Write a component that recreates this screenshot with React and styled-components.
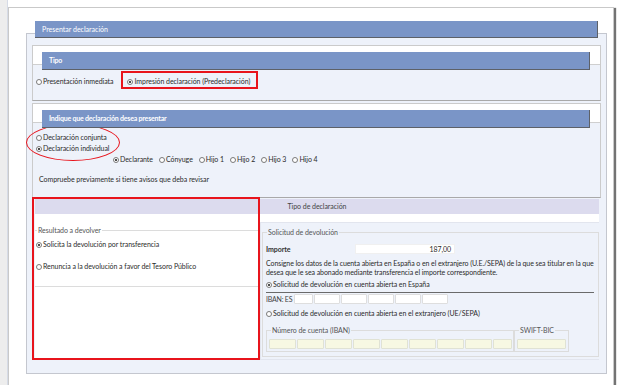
import React from 'react';
import styled, { createGlobalStyle } from 'styled-components';

const GlobalStyle = createGlobalStyle`
  html, body {
    margin: 0;
    padding: 0;
    background: #fff;
  }
  body {
    font-family: Lato, "Liberation Sans", sans-serif;
    font-size: 7px;
    letter-spacing: -0.05px;
    line-height: 11px;
    color: #2b2b2b;
  }
  *, ::before, ::after {
    box-sizing: border-box;
  }
`;

const Page = styled.div`
  position: relative;
  width: 624px;
  height: 385px;
  overflow: hidden;
  padding: 7px 0 0 8px;
  background: linear-gradient(to right, #ededed 0 7px, #d6dbe6 7px 8px, #fff 8px);
`;

const Window = styled.div`
  width: 606px;
  height: 400px;
  background: #fff;
  border: 1px solid #c9c9c9;
  box-shadow: 2px 1px 1px rgba(0, 0, 0, 0.55);
  padding: 13px 6px 0 17px;
`;

const Panel = styled.div`
  display: flex;
  flex-direction: column;
`;

const BarTitle = styled.div`
  position: relative;
  z-index: 2;
  height: ${p => p.$h || 17}px;
  margin: 0 ${p => p.$mr || 9}px 0 ${p => p.$ml || 9}px;
  padding-left: 7px;
  background: #7a95c7;
  border-right: 1px solid #5d6168;
  border-bottom: 1px solid #5d6168;
  color: #fff;
  font-weight: ${p => (p.$bold ? 700 : 400)};
  letter-spacing: ${p => (p.$bold ? '-0.2px' : '0')};
  line-height: ${p => (p.$h || 17) - 1}px;
`;

const PanelBox = styled.div`
  margin-top: -5px;
  border: 1px solid #c4c7cf;
  background: #eef2fa;
  padding: 11px 5px 13px 5px;
`;

const Section = styled.div`
  margin-top: ${p => p.$mt || 0}px;
  border: 1px solid #cbcbcb;
  border-bottom-color: #a9a9a9;
  background: #fff;
  padding-top: 6px;
`;

const SectionBody = styled.div`
  margin-top: -6px;
  border-top: 1px solid #cfcfcf;
  background: #eef2fa;
  padding: ${p => p.$pad};
`;

const RadioRow = styled.div`
  display: flex;
  align-items: center;
  gap: ${p => p.$gap || 0}px;
  height: 11px;
  margin-left: ${p => p.$ml || 0}px;
  margin-top: ${p => p.$mt || 0}px;
`;

const RadioLabel = styled.label`
  display: flex;
  align-items: center;
  white-space: nowrap;
`;

const Dot = styled.span`
  position: relative;
  flex: none;
  width: 6px;
  height: 6px;
  margin-right: 1px;
  border: 1px solid #7a7a7a;
  border-radius: 50%;
  background: #fff;

  &::after {
    content: '';
    display: ${p => (p.$on ? 'block' : 'none')};
    position: absolute;
    left: 1px;
    top: 1px;
    width: 2px;
    height: 2px;
    border-radius: 50%;
    background: #111;
  }
`;

function Radio({ on, children }) {
  return (
    <RadioLabel>
      <Dot $on={on} />
      {children}
    </RadioLabel>
  );
}

const Note = styled.div`
  margin: 9px 0 0 3px;
  height: 11px;
`;

const Lower = styled.div`
  margin: 1px 2px 0 3px;
  background: #fff;
`;

const TabBar = styled.div`
  height: 15px;
  background: #dcdbee;
  text-align: center;
  line-height: 15px;
  color: #444;
`;

const Columns = styled.div`
  display: grid;
  grid-template-columns: 224px 1fr;
  align-items: start;
`;

const LeftCol = styled.div`
  padding-top: 11px;
`;

const RightCol = styled.div`
  margin: 8px 0 0 1px;
  background: #eef2fa;
  border: 1px solid #e2e5ee;
  border-right: none;
  padding: 4px 0 2px 1px;
`;

const Fieldset = styled.fieldset`
  margin: 0;
  min-width: 0;
  width: ${p => (p.$w ? p.$w + 'px' : 'auto')};
  border: 1px solid #dcdcdc;
  border-left-width: ${p => (p.$open ? 0 : 1)}px;
  border-right-width: ${p => (p.$open ? 0 : 1)}px;
  padding: ${p => p.$pad};
`;

const Legend = styled.legend`
  margin-left: ${p => p.$ml || 0}px;
  padding: 0 1px;
  line-height: 10px;
  color: #555;
`;

const ImporteRow = styled.div`
  display: flex;
  align-items: center;
  height: 10px;
  margin-top: 7px;
`;

const Strong = styled.span`
  width: 89px;
  font-weight: 700;
  color: #333;
`;

const Amount = styled.div`
  width: 100px;
  height: 10px;
  padding-right: 3px;
  background: #fff;
  border: 1px solid #f0f0f0;
  text-align: right;
  line-height: 9px;
`;

const Para = styled.p`
  margin: 5px 0 0;
  line-height: 9px;
  letter-spacing: -0.08px;
  white-space: nowrap;
`;

const Rule = styled.div`
  height: 1px;
  margin: 2px 4px 0 0;
  background: #6a6a6a;
`;

const IbanRow = styled.div`
  display: flex;
  align-items: center;
  gap: 1px;
  height: 10px;
  margin-top: 1px;
`;

const IbanText = styled.span`
  flex: none;
  margin-right: 1px;
  white-space: nowrap;
  letter-spacing: -0.2px;
  color: #444;
`;

const Box = styled.div`
  flex: none;
  width: ${p => p.$w}px;
  height: ${p => p.$h || 10}px;
  background: ${p => (p.$tint ? '#f7f8e3' : '#fff')};
  border: 1px solid ${p => (p.$tint ? '#e0e2d4' : '#dedede')};
  border-radius: 1px;
`;

const AccountRow = styled.div`
  display: flex;
  margin-top: 6px;
`;

const BoxRow = styled.div`
  display: flex;
  gap: 1px;
  margin-top: 4px;
`;

const ButtonRow = styled.div`
  display: flex;
  padding: 12px 0 0 250px;
`;

const YellowButton = styled.button`
  width: 84px;
  height: 20px;
  background: #fbfbcf;
  border: 1px solid #8a8a6a;
  border-radius: 2px;
  box-shadow: 1px 1px 1px rgba(0, 0, 0, 0.3);
`;

const RedRect = styled.div`
  position: absolute;
  left: ${p => p.$x}px;
  top: ${p => p.$y}px;
  width: ${p => p.$w}px;
  height: ${p => p.$h}px;
  border: 2px solid #e8141c;
  pointer-events: none;
`;

const RedEllipse = styled(RedRect)`
  border-width: 1.5px;
  border-radius: 50%;
`;

const ibanWidths = [27, 27, 27, 27, 27, 27, 27, 27, 19];
const esWidths = [19, 26, 26, 26, 26, 26];

export default function App() {
  return (
    <Page>
      <GlobalStyle />
      <Window>
        <Panel>
          <BarTitle>Presentar declaración</BarTitle>
          <PanelBox>
            <Section>
              <BarTitle $h={18} $mr={10} $bold>Tipo</BarTitle>
              <SectionBody $pad="11px 3px 13px">
                <RadioRow $gap={14}>
                  <Radio>Presentación inmediata</Radio>
                  <Radio on>Impresión declaración (Predeclaración)</Radio>
                </RadioRow>
              </SectionBody>
            </Section>

            <Section $mt={2}>
              <BarTitle $h={18} $mr={10} $bold>Indique que declaración desea presentar</BarTitle>
              <SectionBody $pad="9px 3px 12px">
                <RadioRow>
                  <Radio>Declaración conjunta</Radio>
                </RadioRow>
                <RadioRow>
                  <Radio on>Declaración individual</Radio>
                </RadioRow>
                <RadioRow $ml={77} $gap={6}>
                  <Radio on>Declarante</Radio>
                  <Radio>Cónyuge</Radio>
                  <Radio>Hijo 1</Radio>
                  <Radio>Hijo 2</Radio>
                  <Radio>Hijo 3</Radio>
                  <Radio>Hijo 4</Radio>
                </RadioRow>
                <Note>Compruebe previamente si tiene avisos que deba revisar</Note>
              </SectionBody>
            </Section>

            <Lower>
              <TabBar>Tipo de declaración</TabBar>
              <Columns>
                <LeftCol>
                  <Fieldset $open $pad="0 0 14px 1px">
                    <Legend $ml={1}>Resultado a devolver</Legend>
                    <RadioRow $mt={4}>
                      <Radio on>Solicita la devolución por transferencia</Radio>
                    </RadioRow>
                    <RadioRow $mt={11}>
                      <Radio>Renuncia a la devolución a favor del Tesoro Público</Radio>
                    </RadioRow>
                  </Fieldset>
                </LeftCol>

                <RightCol>
                  <Fieldset $pad="0 0 4px 3px">
                    <Legend $ml={1}>Solicitud de devolución</Legend>
                    <ImporteRow>
                      <Strong>Importe</Strong>
                      <Amount>187,00</Amount>
                    </ImporteRow>
                    <Para>
                      Consigne los datos de la cuenta abierta en España o en el extranjero (U.E./SEPA) de la que sea titular en la que
                      <br />
                      desea que le sea abonado mediante transferencia el importe correspondiente.
                    </Para>
                    <RadioRow $mt={2}>
                      <Radio on>Solicitud de devolución en cuenta abierta en España</Radio>
                    </RadioRow>
                    <Rule />
                    <IbanRow>
                      <IbanText>IBAN: ES</IbanText>
                      {esWidths.map((w, i) => (
                        <Box key={'es_' + i} $w={w} />
                      ))}
                    </IbanRow>
                    <RadioRow $mt={4}>
                      <Radio>Solicitud de devolución en cuenta abierta en el extranjero (UE/SEPA)</Radio>
                    </RadioRow>
                    <AccountRow>
                      <Fieldset $w={248} $pad="0 1px 2px 2px">
                        <Legend $ml={2}>Número de cuenta (IBAN)</Legend>
                        <BoxRow>
                          {ibanWidths.map((w, i) => (
                            <Box key={'iban_' + i} $w={w} $tint />
                          ))}
                        </BoxRow>
                      </Fieldset>
                      <Fieldset $w={55} $pad="0 2px 2px 2px">
                        <Legend $ml={2}>SWIFT-BIC</Legend>
                        <BoxRow>
                          <Box $w={49} $tint />
                        </BoxRow>
                      </Fieldset>
                    </AccountRow>
                  </Fieldset>
                </RightCol>
              </Columns>
            </Lower>
          </PanelBox>
        </Panel>
        <ButtonRow>
          <YellowButton />
        </ButtonRow>
      </Window>

      <RedRect $x={121} $y={71} $w={137} $h={18} />
      <RedEllipse $x={26} $y={124} $w={94} $h={37} />
      <RedRect $x={32} $y={197} $w={228} $h={163} />
    </Page>
  );
}
